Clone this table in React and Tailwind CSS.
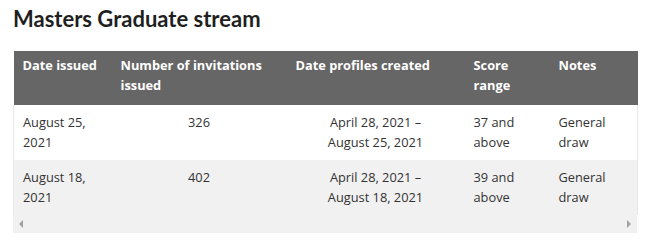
import React from "react";

const rows = [
  { date: "August 25, 2021", num: "326", range: ["April 28, 2021 –", "August 25, 2021"], score: "37 and above", notes: "General draw", bg: "bg-white" },
  { date: "August 18, 2021", num: "402", range: ["April 28, 2021 –", "August 18, 2021"], score: "39 and above", notes: "General draw", bg: "bg-[#f1f1f1]" },
];

export default function App() {
  return (
    <div className="w-[650px] h-[241px] bg-white pl-[13px] pt-[6px] overflow-hidden" style={{ fontFamily: "'Open Sans', sans-serif" }}>
      <h2 className="text-[22px] leading-[26px] font-bold text-[#1f1f1f]" style={{ fontFamily: "Lato, sans-serif" }}>
        Masters Graduate stream
      </h2>
      <div className="mt-[19px] w-[624px]">
        <table className="w-[624px] table-fixed border-collapse text-[12.8px] leading-[19.5px] text-[#333]">
          <colgroup>
            <col className="w-[98px]" />
            <col className="w-[175px]" />
            <col className="w-[178px]" />
            <col className="w-[85px]" />
            <col className="w-[88px]" />
          </colgroup>
          <thead>
            <tr className="bg-[#666666] text-white font-bold text-left align-top">
              <th className="px-[9px] pt-[5px] pb-[10px] h-[54px]">Date issued</th>
              <th className="px-[9px] pt-[5px] pb-[10px]">Number of invitations issued</th>
              <th className="px-[9px] pt-[5px] pb-[10px]">Date profiles created</th>
              <th className="px-[9px] pt-[5px] pb-[10px]">Score range</th>
              <th className="px-[9px] pt-[5px] pb-[10px]">Notes</th>
            </tr>
          </thead>
          <tbody>
            {rows.map((r, i) => (
              <tr key={i} className={`${r.bg} align-top`}>
                <td className="px-[9px] py-[8px] border-l border-[#e8e8e8]">{r.date}</td>
                <td className="px-[9px] py-[8px] text-center">{r.num}</td>
                <td className="px-[9px] py-[8px] text-center">
                  {r.range[0]}
                  <br />
                  {r.range[1]}
                </td>
                <td className="px-[9px] py-[8px]">{r.score}</td>
                <td className="px-[9px] py-[8px] border-r border-[#e8e8e8]">{r.notes}</td>
              </tr>
            ))}
          </tbody>
        </table>
        <div className="h-[18px] bg-[#f1f1f1] flex items-center justify-between px-[5px]">
          <svg width="6" height="8" viewBox="0 0 6 8">
            <polygon points="5,0 5,8 1,4" fill="#a3a3a3" />
          </svg>
          <svg width="6" height="8" viewBox="0 0 6 8">
            <polygon points="1,0 1,8 5,4" fill="#a3a3a3" />
          </svg>
        </div>
      </div>
    </div>
  );
}
